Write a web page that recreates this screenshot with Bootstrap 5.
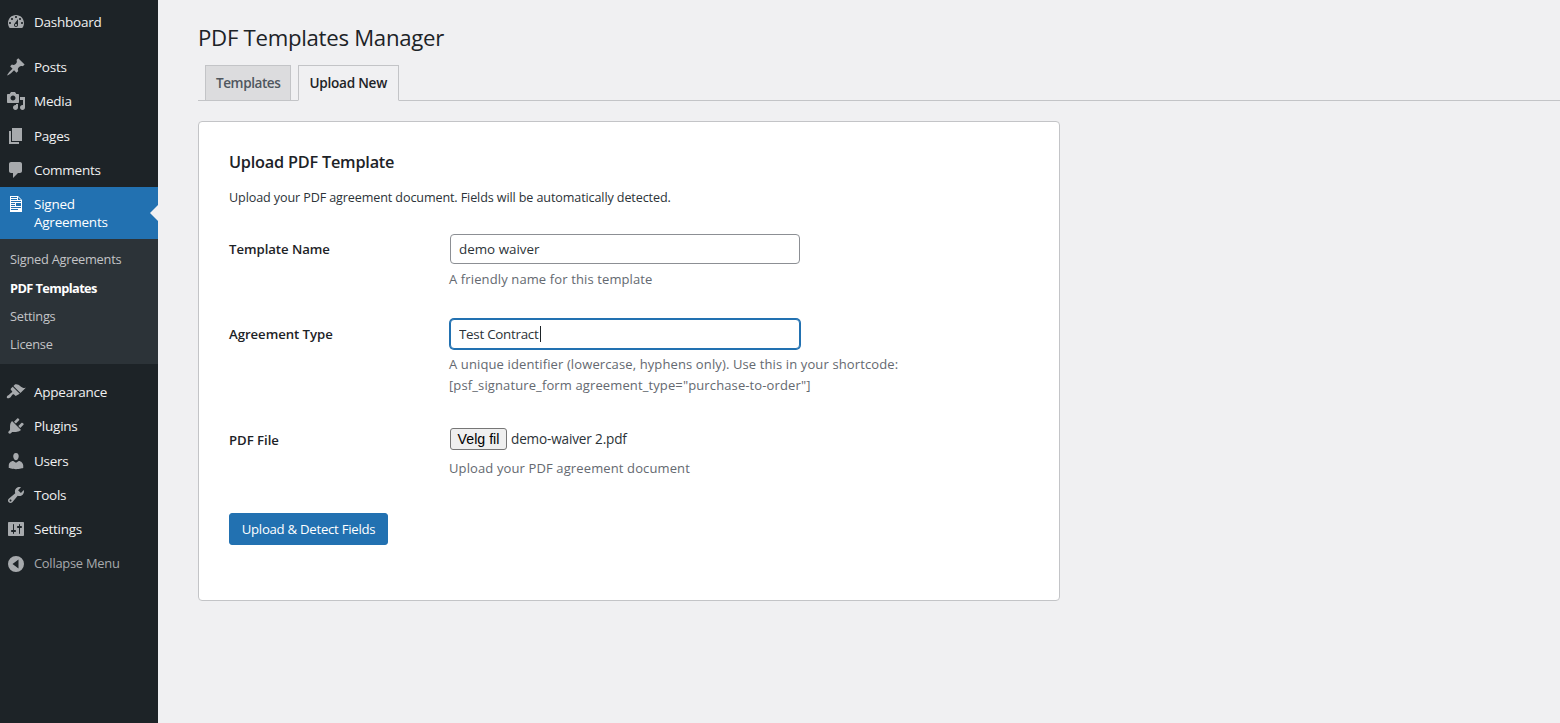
<!DOCTYPE html>
<html lang="en"><head><meta charset="utf-8"><title>PDF Templates Manager</title>
<link href="https://cdn.jsdelivr.net/npm/bootstrap@5.3.0/dist/css/bootstrap.min.css" rel="stylesheet">
<style>
html,body{height:100%}
body{background:#f0f0f2;font-family:"Open Sans","Noto Sans",sans-serif;font-size:13.2px;letter-spacing:-.25px;color:#2c3338;overflow:hidden}
.wp-shell{height:723px}
.wp-side{width:158px;flex:none;background:#1d2327;padding-top:5px}
.wp-item{height:34.2px;color:#f0f0f1;font-size:13.5px;gap:8px;padding-left:6px;text-decoration:none}
.wp-item svg{width:20px;height:20px;fill:#a7aaad;flex:none}
.wp-sub~.wp-item{height:34.32px}
.wp-first{margin-bottom:11px}
.wp-active{height:52px;background:#2271b1;color:#fff;line-height:18px;position:relative}
.wp-active svg{fill:#fff;align-self:flex-start;margin-top:7px}
.wp-active::after{content:"";position:absolute;right:0;top:18px;border:8px solid transparent;border-right-color:#f0f0f2;border-left:0}
.wp-sub{background:#2c3338;padding:7px 0 5px;margin-bottom:11px}
.wp-sub a{display:flex;align-items:center;height:28.25px;padding-left:10px;color:#c3c4c7;text-decoration:none;font-size:12.8px}
.wp-sub a.wp-cur{color:#fff;font-weight:700;letter-spacing:-.6px}
.wp-item.wp-muted{color:#a7aaad;font-size:12.9px}
.wp-main{flex:1;min-width:0;padding:0 0 0 40px}
.wp-title{font-size:22.2px;font-weight:400;color:#1d2327;margin:0;line-height:30px;padding-top:23px;letter-spacing:-.28px}
.wp-tabs{border-bottom:1px solid #c3c4c7;margin-top:12px;padding-left:7px;gap:7px;height:36px}
.wp-tab{height:36px;border:1px solid #c3c4c7;background:#dcdcde;color:#50575e;font-weight:600;font-size:13.6px;display:flex;align-items:center;padding:0 10px;text-decoration:none;letter-spacing:-.45px}
.wp-tab.wp-on{background:#f0f0f2;border-bottom-color:#f0f0f2;color:#1d2327;letter-spacing:-.25px;padding-right:11px}
.wp-panel{width:862px;height:480px;margin-top:20px;border:1px solid #c3c4c7;border-radius:4px;padding:30px 30px 0;background:#fff}
.wp-h{font-size:16.3px;font-weight:600;color:#1d2327;line-height:20px;margin:0 0 16px;letter-spacing:-.22px}
.wp-lead{margin:0;line-height:20px;font-size:12.6px;letter-spacing:-.12px;color:#2c3338}
.wp-row{display:flex}
.wp-r1{margin-top:26px}
.wp-r2{margin-top:29px}
.wp-r3{margin-top:32px}
.wp-lab{width:220px;flex:none;font-weight:600;color:#1d2327;font-size:13.2px;letter-spacing:-.05px;padding-top:6px}
.wp-r3 .wp-lab{padding-top:3px}
.wp-in{width:350px;height:30px;margin-left:1px;border:1px solid #8c8f94;border-radius:4px;padding:0 8px;font:inherit;font-size:13.4px;color:#2c3338;background:#fff;display:block}
.wp-in.wp-focus{border-color:#2271b1;box-shadow:0 0 0 1px #2271b1;outline:0;letter-spacing:-.28px}
.wp-help{color:#646970;margin:5px 0 0;line-height:21px;font-size:13px;letter-spacing:.12px}
.wp-r3 .wp-help{margin-top:8px}
.wp-caretbox{position:relative;width:351px}
.wp-caret{position:absolute;left:91px;top:7px;width:1px;height:16px;background:#1d2327}
.wp-file{margin-left:1px;font-family:"Liberation Sans",sans-serif;font-size:14.2px;letter-spacing:0;height:22px;width:57px;padding:0;border:1px solid #767676;border-radius:3px;background:#efefef;color:#000;line-height:1}
.wp-fname{font-size:13.6px;letter-spacing:-.17px;color:#2c3338}
.wp-submit{margin-top:34px;background:#2271b1;color:#fff;border:1px solid #2271b1;border-radius:3px;width:159px;height:32px;padding:1px 0 0;font-size:13.2px;letter-spacing:-.27px;--bs-btn-hover-bg:#2271b1;--bs-btn-hover-color:#fff}
</style></head><body>
<div class="wp-shell d-flex">
<nav class="wp-side">
<a class="wp-item wp-first d-flex align-items-center" href="#"><svg viewBox="0 0 20 20"><path d="M3.76 16h12.48c1.1-1.37 1.76-3.11 1.76-5 0-4.42-3.58-8-8-8s-8 3.58-8 8c0 1.89.66 3.63 1.76 5zM10 4c.55 0 1 .45 1 1s-.45 1-1 1-1-.45-1-1 .45-1 1-1zM6 6c.55 0 1 .45 1 1s-.45 1-1 1-1-.45-1-1 .45-1 1-1zm8 0c.55 0 1 .45 1 1s-.45 1-1 1-1-.45-1-1 .45-1 1-1zm-5.37 5.55L12 7v6c0 1.1-.9 2-2 2s-2-.9-2-2c0-.57.24-1.08.63-1.45zM4 10c.55 0 1 .45 1 1s-.45 1-1 1-1-.45-1-1 .45-1 1-1zm12 0c.55 0 1 .45 1 1s-.45 1-1 1-1-.45-1-1 .45-1 1-1zm-5 3c0-.55-.45-1-1-1s-1 .45-1 1 .45 1 1 1 1-.45 1-1z" fill-rule="evenodd"/></svg>Dashboard</a>
<a class="wp-item d-flex align-items-center" href="#"><svg viewBox="0 0 20 20"><path d="M10.44 3.02l1.82-1.82 6.36 6.35-1.83 1.82c-1.05-.68-2.48-.57-3.41.36l-.75.75c-.92.93-1.04 2.35-.35 3.41l-1.83 1.82-2.41-2.41-2.8 2.79c-.42.42-3.38 2.71-3.8 2.29s1.86-3.39 2.28-3.81l2.79-2.79L4.1 9.36l1.83-1.82c1.05.69 2.48.57 3.4-.36l.75-.75c.93-.92 1.05-2.35.36-3.41z"/></svg>Posts</a>
<a class="wp-item d-flex align-items-center" href="#"><svg viewBox="0 0 20 20"><path d="M13 11V4c0-.55-.45-1-1-1h-1.67L9 1H5L3.67 3H2c-.55 0-1 .45-1 1v7c0 .55.45 1 1 1h10c.55 0 1-.45 1-1zM7 4.5c1.38 0 2.5 1.12 2.5 2.5S8.38 9.5 7 9.5 4.5 8.38 4.5 7 5.62 4.5 7 4.5zM14 6h5v10.5c0 1.38-1.12 2.5-2.5 2.5S14 17.88 14 16.5s1.12-2.5 2.5-2.5c.17 0 .34.02.5.05V9h-3V6zm-4 8.05V13h2v3.5c0 1.38-1.12 2.5-2.5 2.5S7 17.88 7 16.5 8.12 14 9.5 14c.17 0 .34.02.5.05z"/></svg>Media</a>
<a class="wp-item d-flex align-items-center" href="#"><svg viewBox="0 0 20 20"><path d="M6 15V2h10v13H6zm-1 1h8v2H3V5h2v11z"/></svg>Pages</a>
<a class="wp-item d-flex align-items-center" href="#"><svg viewBox="0 0 20 20"><path d="M5 2h9c1.1 0 2 .9 2 2v7c0 1.1-.9 2-2 2h-2l-5 5v-5H5c-1.1 0-2-.9-2-2V4c0-1.1.9-2 2-2z"/></svg>Comments</a>
<a class="wp-item wp-active d-flex align-items-center" href="#"><svg viewBox="0 0 20 20"><path d="M12 2l4 4v12H4V2h8zM5 3v1h6V3H5zm7 3h3l-3-3v3zM5 5v1h6V5H5zm10 3V7H5v1h10zM5 9v1h4V9H5zm10 3V9h-5v3h5zM5 11v1h4v-1H5zm10 3v-1H5v1h10zm-3 2v-1H5v1h7z"/></svg><span>Signed<br>Agreements</span></a>
<div class="wp-sub">
<a href="#">Signed Agreements</a><a class="wp-cur" href="#">PDF Templates</a><a href="#">Settings</a><a href="#">License</a>
</div>
<a class="wp-item d-flex align-items-center" href="#"><svg viewBox="0 0 20 20"><path d="M14.48 11.06L7.41 3.99l1.5-1.5c.5-.56 2.3-.47 3.51.32 1.21.8 1.43 1.28 2.91 2.1 1.18.64 2.45 1.26 4.45.85zm-.71.71L6.7 4.7 4.93 6.47c-.39.39-.39 1.02 0 1.41l1.06 1.06c.39.39.39 1.03 0 1.42-.6.6-1.43 1.11-2.21 1.69-.35.26-.7.53-1.01.84C1.43 13.23.05 14.85 1.09 15.9s2.67-.34 3.04-.41.54-.37.81-.72c.58-.78 1.09-1.61 1.69-2.21.39-.39 1.03-.39 1.42 0l1.06 1.06c.39.39 1.02.39 1.41 0z"/></svg>Appearance</a>
<a class="wp-item d-flex align-items-center" href="#"><svg viewBox="0 0 20 20"><path d="M13.11 4.36L9.87 7.6 8 5.73l3.24-3.24c.35-.34 1.05-.2 1.56.32.52.51.66 1.21.31 1.55zm-8 1.77l.91-1.12 9.01 9.01-1.19.84c-.71.71-2.63 1.16-3.82 1.16H6.14L4.9 17.26c-.59.59-1.54.59-2.12 0-.59-.58-.59-1.53 0-2.12l1.24-1.24v-3.88c0-1.13.4-3.19 1.09-3.89zm7.26 3.97l3.24-3.24c.34-.35 1.04-.21 1.55.31.52.51.66 1.21.31 1.55l-3.24 3.25z"/></svg>Plugins</a>
<a class="wp-item d-flex align-items-center" href="#"><svg viewBox="0 0 20 20"><path d="M10 9.25c-2.27 0-2.73-3.44-2.73-3.44C7 4.02 7.82 2 9.97 2c2.16 0 2.98 2.02 2.71 3.81 0 0-.41 3.44-2.68 3.44zm0 2.57L12.72 10c2.39 0 4.52 2.33 4.52 4.53v2.49s-3.65 1.13-7.24 1.13c-3.65 0-7.24-1.13-7.24-1.13v-2.49c0-2.25 1.94-4.48 4.47-4.48z"/></svg>Users</a>
<a class="wp-item d-flex align-items-center" href="#"><svg viewBox="0 0 20 20"><path fill-rule="evenodd" d="M16.68 9.77c-1.34 1.34-3.3 1.67-4.95.99l-5.41 6.52c-.99.99-2.59.99-3.58 0s-.99-2.59 0-3.57l6.52-5.42c-.68-1.65-.35-3.61.99-4.95 1.28-1.28 3.12-1.62 4.72-1.06l-2.89 2.89 2.82 2.82 2.86-2.87c.53 1.58.18 3.39-1.08 4.65zM3.81 16.21c.4.39 1.04.39 1.43 0 .4-.4.4-1.04 0-1.43-.39-.4-1.03-.4-1.43 0-.39.39-.39 1.03 0 1.43z"/></svg>Tools</a>
<a class="wp-item d-flex align-items-center" href="#"><svg viewBox="0 0 20 20"><path fill-rule="evenodd" d="M18 16V4c0-.55-.45-1-1-1H3c-.55 0-1 .45-1 1v12c0 .55.45 1 1 1h14c.55 0 1-.45 1-1zM8 11h1c.55 0 1 .45 1 1s-.45 1-1 1H8v1.5c0 .28-.22.5-.5.5s-.5-.22-.5-.5V13H6c-.55 0-1-.45-1-1s.45-1 1-1h1V5.5c0-.28.22-.5.5-.5s.5.22.5.5V11zm5-2h-1c-.55 0-1-.45-1-1s.45-1 1-1h1V5.5c0-.28.22-.5.5-.5s.5.22.5.5V7h1c.55 0 1 .45 1 1s-.45 1-1 1h-1v5.5c0 .28-.22.5-.5.5s-.5-.22-.5-.5V9z"/></svg>Settings</a>
<a class="wp-item wp-muted d-flex align-items-center" href="#"><svg viewBox="0 0 20 20"><path fill-rule="evenodd" d="M10 2a8 8 0 1 0 0 16 8 8 0 0 0 0-16zm2.5 3.5v9L6.5 10z"/></svg>Collapse Menu</a>
</nav>
<main class="wp-main">
<h1 class="wp-title">PDF Templates Manager</h1>
<div class="wp-tabs d-flex"><a class="wp-tab" href="#">Templates</a><a class="wp-tab wp-on" href="#">Upload New</a></div>
<section class="wp-panel">
<h2 class="wp-h">Upload PDF Template</h2>
<p class="wp-lead">Upload your PDF agreement document. Fields will be automatically detected.</p>
<div class="wp-row wp-r1">
<div class="wp-lab">Template Name</div>
<div><input class="wp-in" type="text" value="demo waiver"><p class="wp-help">A friendly name for this template</p></div>
</div>
<div class="wp-row wp-r2">
<div class="wp-lab">Agreement Type</div>
<div><div class="wp-caretbox"><input class="wp-in wp-focus" type="text" value="Test Contract"><span class="wp-caret"></span></div><p class="wp-help">A unique identifier (lowercase, hyphens only). Use this in your shortcode:<br>[psf_signature_form agreement_type="purchase-to-order"]</p></div>
</div>
<div class="wp-row wp-r3">
<div class="wp-lab">PDF File</div>
<div><div class="d-flex align-items-center gap-1"><button class="wp-file" type="button">Velg fil</button><span class="wp-fname">demo-waiver 2.pdf</span></div><p class="wp-help">Upload your PDF agreement document</p></div>
</div>
<button class="btn wp-submit" type="button">Upload &amp; Detect Fields</button>
</section>
</main>
</div>
<script src="https://cdn.jsdelivr.net/npm/bootstrap@5.3.0/dist/js/bootstrap.bundle.min.js"></script>
</body></html>
